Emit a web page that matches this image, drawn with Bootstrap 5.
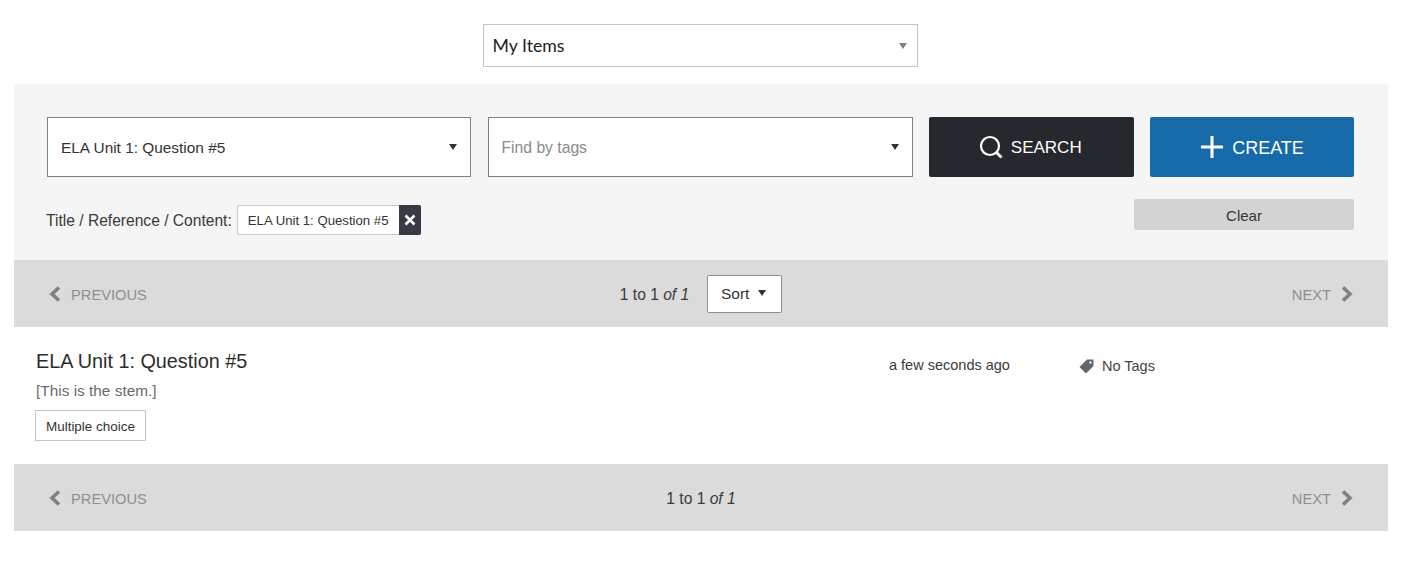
<!doctype html>
<html lang="en"><head><meta charset="utf-8"><title>My Items</title>
<link rel="stylesheet" href="https://cdn.jsdelivr.net/npm/bootstrap@5.3.0/dist/css/bootstrap.min.css">
<style>
html,body{background:#fff}
body{font-family:"Liberation Sans",Arial,sans-serif;color:#333;font-size:14px;height:570px;overflow:hidden}
.pg{padding:24px 15px 0 14px}
.bank-wrap{display:flex;justify-content:center;padding-right:2px;margin-bottom:17px}
.bank{width:435px;height:43px;border:1px solid #c4c4c4;background:#fff;font-family:Lato,sans-serif;font-size:17.7px;color:#222;padding:1px 9px 0;display:flex;align-items:center;justify-content:space-between}
.tri{width:0;height:0;border-left:4.5px solid transparent;border-right:4.5px solid transparent;border-top:6px solid #333;display:block}
.bank .tri{border-top-color:#808080;border-left-width:4px;border-right-width:4px;margin-right:1px;margin-top:-1px}
.filters{background:#f5f5f5;height:176px;padding:33px 34px 0 33px}
.srow{display:grid;grid-template-columns:424px 425px 204.5px 204px;column-gap:16.5px}
.sel{height:60px;background:#fff;border:1px solid #808080;font-size:15.4px;color:#333;padding:2px 13px 0;display:flex;align-items:center;justify-content:space-between}
.sel.ph{color:#8a8a8a;font-size:15.7px}
.sel .tri{margin-right:0;margin-top:-3px}
.act{height:60px;border:0;border-radius:2px;color:#fff;font-size:18px;display:flex;align-items:center;justify-content:center;gap:8px;padding:0}
.act-s{background:#25282d;font-size:17px;padding-right:2px}.act-c{background:#176aa8}
.act span{padding-top:2px}
.lower{display:flex;justify-content:space-between;align-items:flex-start;margin-top:22px}
.crit{display:flex;align-items:center;margin-top:6px;margin-left:-1px;font-size:15.6px;color:#3a3a3a;gap:5px}
.crit>span{padding-top:2px}
.chip{display:flex;height:30px;border-radius:2px;background:#fff;border:1px solid #c8c8c8;border-right:0;font-size:13.2px;color:#333;align-items:center;padding-left:10px}
.chip .x{width:22px;height:30px;margin:-1px 0;background:#383b44;color:#fff;margin-left:10px;border-radius:0 2px 2px 0;display:flex;align-items:center;justify-content:center}
.chip>span:first-child{padding-top:1px}
.clr{width:220px;height:31px;border:0;border-radius:2px;background:#d3d3d3;color:#333;font-size:15px;padding:3px 0 0}
.pager{height:67px;background:#dbdbdb;display:grid;grid-template-columns:1fr auto 1fr;align-items:center;padding:0 35px;font-size:14.7px;color:#8f8f8f}
.pv,.nx{display:flex;align-items:center;gap:10px}
.pv span,.nx span{padding-top:4px}
.pv svg,.nx svg{margin-top:2px}
.nx{justify-content:flex-end}
.cnt{color:#3a3a3a;font-size:15.6px;display:flex;align-items:center;gap:18px}
.cnt>span{padding-top:2px}
.sortb{width:75px;height:38px;background:#fff;border:1px solid #8f8f8f;border-radius:2px;display:flex;align-items:center;justify-content:center;gap:9px;color:#333;font-size:15.5px;padding:1px 2px 0 0}
.sortb .tri{margin-top:-2px}
.itemrow{height:137px;display:grid;grid-template-columns:853px 191px 1fr;padding:22px 0 0 22px}
.ttl{font-size:19.8px;line-height:24px;color:#2c2c2c}
.stem{font-size:15.4px;line-height:18px;color:#6b6b6b;margin-top:9px}
.kind{display:inline-block;height:31px;line-height:31px;padding:0 10px;border:1px solid #c4c4c4;font-size:13.45px;color:#333;margin-top:10px;margin-left:-1px}
.when{font-size:14.5px;padding-top:8px;line-height:16px;color:#3a3a3a}
.tags{font-size:14.5px;padding-top:8px;line-height:18px;display:flex;align-items:center;gap:8px;color:#444;height:26px;margin-left:-1px}
</style></head><body>
<div class="pg">
<div class="bank-wrap"><div class="bank"><span>My Items</span><i class="tri"></i></div></div>
<div class="filters">
 <div class="srow">
  <div class="sel"><span>ELA Unit 1: Question #5</span><i class="tri"></i></div>
  <div class="sel ph"><span>Find by tags</span><i class="tri"></i></div>
  <button class="btn act act-s"><svg width="24" height="24" viewBox="0 0 24 24" fill="none" stroke="#fff" stroke-width="2.200"><circle cx="11" cy="11" r="9"/><path d="M17.500 17.500 22.500 22.500" stroke-width="2.800"/></svg><span>SEARCH</span></button>
  <button class="btn act act-c"><svg width="24" height="24" viewBox="0 0 24 24" fill="#fff"><path d="M10.500 1h3v9.500h9.500v3h-9.500v9.500h-3v-9.500H1v-3h9.500z"/></svg><span>CREATE</span></button>
 </div>
 <div class="lower">
  <div class="crit"><span>Title / Reference / Content:</span><div class="chip"><span>ELA Unit 1: Question #5</span><span class="x"><svg width="12" height="12" viewBox="0 0 12 12" stroke="#fff" stroke-width="2.600"><path d="M1.500 1.500 10.500 10.500M10.500 1.500 1.500 10.500"/></svg></span></div></div>
  <button class="btn clr">Clear</button>
 </div>
</div>
<div class="pager">
 <div class="pv"><svg width="12" height="16" viewBox="0 0 12 16" fill="none" stroke="#808080" stroke-width="3.600"><path d="M10 1.500 3 8l7 6.500"/></svg><span>PREVIOUS</span></div>
 <div class="cnt"><span>1 to 1 <em>of 1</em></span><button class="btn sortb"><span>Sort</span><i class="tri"></i></button></div>
 <div class="nx"><span>NEXT</span><svg width="12" height="16" viewBox="0 0 12 16" fill="none" stroke="#808080" stroke-width="3.600"><path d="M2 1.500 9 8l-7 6.500"/></svg></div>
</div>
<div class="itemrow">
 <div><div class="ttl">ELA Unit 1: Question #5</div><div class="stem">[This is the stem.]</div><div class="kind">Multiple choice</div></div>
 <div class="when">a few seconds ago</div>
 <div class="tags"><svg width="15" height="15" viewBox="0 0 15 15" fill="#666"><path fill-rule="evenodd" d="M0.500 8 8 0.500 14.500 0.500 14.500 7 7 14.500zM11.500 2.300a1.200 1.200 0 1 0 0.010 0z"/></svg><span>No Tags</span></div>
</div>
<div class="pager">
 <div class="pv"><svg width="12" height="16" viewBox="0 0 12 16" fill="none" stroke="#808080" stroke-width="3.600"><path d="M10 1.500 3 8l7 6.500"/></svg><span>PREVIOUS</span></div>
 <div class="cnt"><span>1 to 1 <em>of 1</em></span></div>
 <div class="nx"><span>NEXT</span><svg width="12" height="16" viewBox="0 0 12 16" fill="none" stroke="#808080" stroke-width="3.600"><path d="M2 1.500 9 8l-7 6.500"/></svg></div>
</div>
</div>
<script src="https://cdn.jsdelivr.net/npm/bootstrap@5.3.0/dist/js/bootstrap.bundle.min.js"></script>
</body></html>
